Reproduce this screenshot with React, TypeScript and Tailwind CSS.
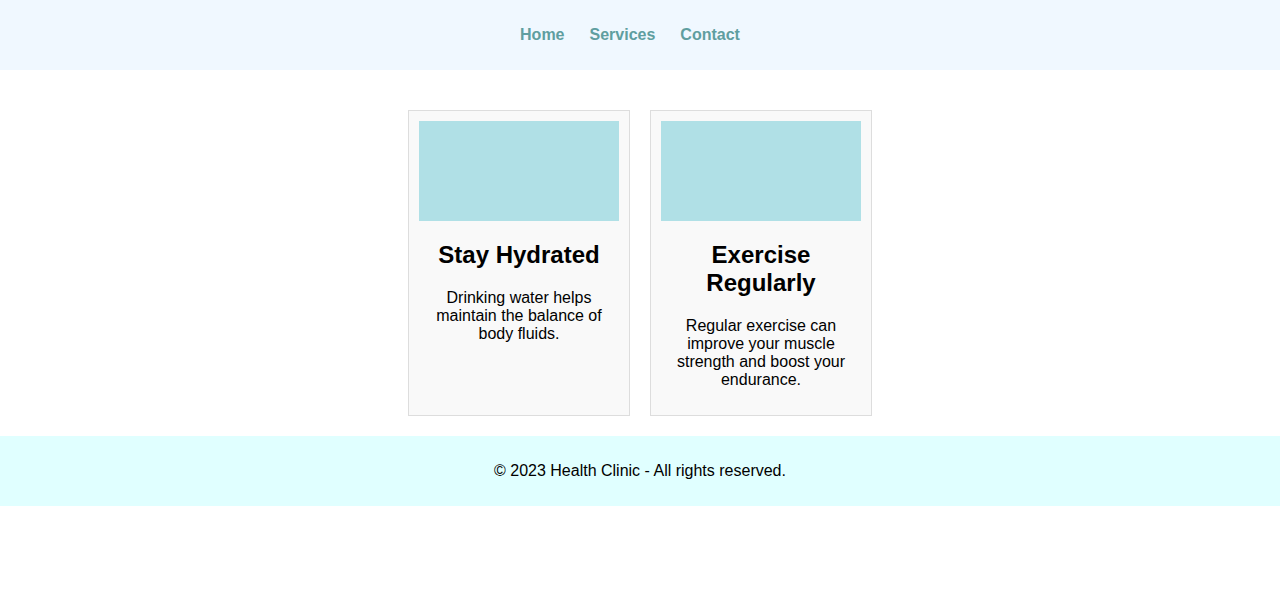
import React from 'react';

interface TipCardProps {
  title: string;
  text: string;
}

function TipCard({ title, text }: TipCardProps) {
  return (
    <div className="w-[222px] border border-[#dddddd] bg-[#f9f9f9] p-[10px] text-center">
      <div className="h-[100px] w-[200px] bg-[#b0e0e6]" />
      <h2 className="my-5 text-[24px] font-bold leading-[normal] text-black">{title}</h2>
      <p className="mb-4 text-[16px] leading-[normal] text-black">{text}</p>
    </div>
  );
}

export default function App() {
  return (
    <div className="min-h-[600px] bg-white font-['Liberation_Sans',Arial,sans-serif] leading-[normal]">
      <header className="flex h-[70px] items-center justify-center bg-[#f0f8ff]">
        <nav className="flex gap-[25px] pr-5 text-[16px] font-bold text-[#5f9ea0]">
          <a href="#">Home</a>
          <a href="#">Services</a>
          <a href="#">Contact</a>
        </nav>
      </header>
      <main className="flex items-stretch justify-center gap-5 pt-10 pb-5">
        <TipCard
          title="Stay Hydrated"
          text="Drinking water helps maintain the balance of body fluids."
        />
        <TipCard
          title="Exercise Regularly"
          text="Regular exercise can improve your muscle strength and boost your endurance."
        />
      </main>
      <footer className="flex h-[70px] items-center justify-center bg-[#e0ffff] text-[16px] text-black">
        © 2023 Health Clinic - All rights reserved.
      </footer>
    </div>
  );
}
